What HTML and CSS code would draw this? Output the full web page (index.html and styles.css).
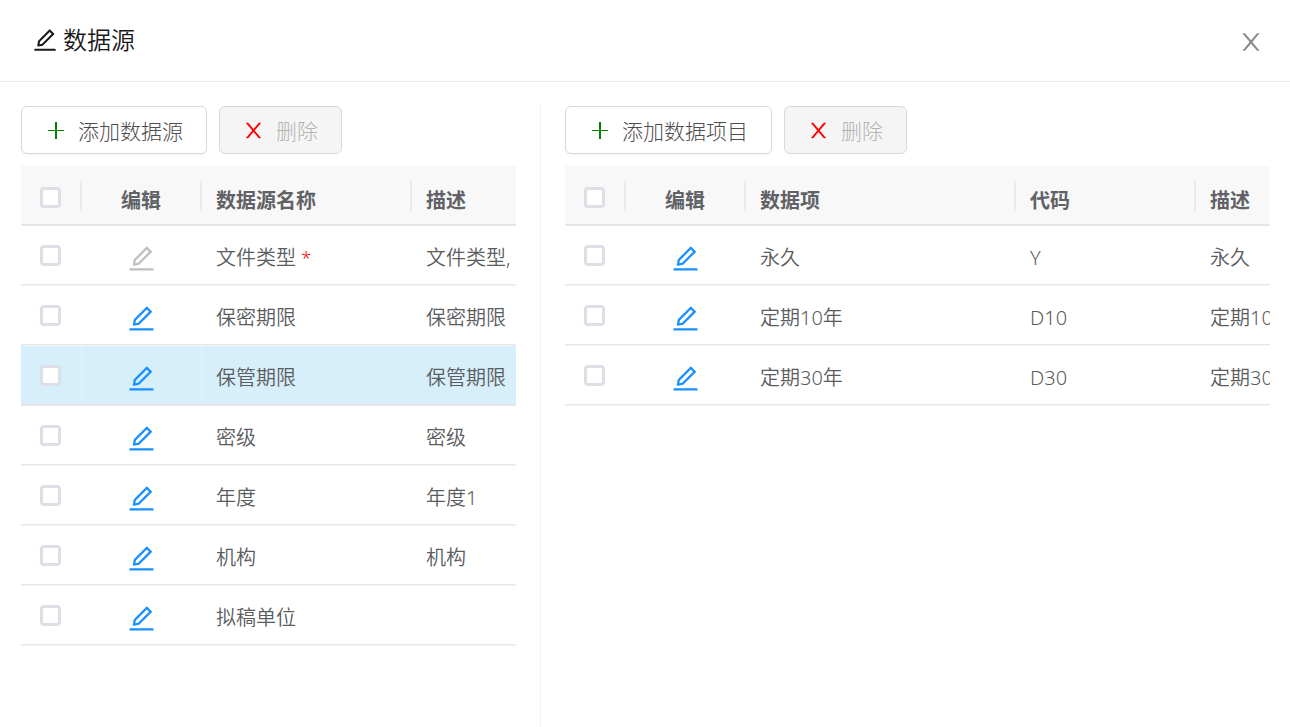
FILE: index.html
```
<!DOCTYPE html>
<html lang="zh-CN">
<head>
<meta charset="utf-8">
<meta name="viewport" content="width=device-width, initial-scale=1">
<title>数据源</title>
<link rel="stylesheet" href="styles.css">
</head>
<body>
<svg class="sprite" aria-hidden="true">
  <symbol id="icon-edit" viewBox="64 64 896 896"><path d="M257.7 752c2 0 4-.2 6-.5L431.9 722c2-.4 3.9-1.3 5.3-2.8l423.9-423.9a9.96 9.96 0 000-14.1L694.9 114.9c-1.9-1.9-4.4-2.9-7.1-2.9s-5.2 1-7.1 2.9L256.8 538.8c-1.5 1.5-2.4 3.3-2.8 5.3l-29.5 168.2a33.5 33.5 0 009.4 29.8c6.6 6.4 14.9 9.9 23.8 9.9zm67.4-174.4L687.8 215l73.3 73.3-362.7 362.6-88.9 15.7 15.6-89zM880 836H144c-17.7 0-32 14.3-32 32v36c0 4.4 3.6 8 8 8h784c4.4 0 8-3.6 8-8v-36c0-17.7-14.3-32-32-32z"/></symbol>
  <symbol id="icon-close" viewBox="64 64 896 896"><path d="M563.8 512l262.5-312.9c4.4-5.2.7-13.1-6.1-13.1h-79.8c-4.7 0-9.2 2.1-12.3 5.7L511.6 449.8 295.1 191.7c-3-3.6-7.5-5.7-12.3-5.7H203c-6.8 0-10.5 7.9-6.1 13.1L459.4 512 196.9 824.9A7.95 7.95 0 00203 838h79.8c4.7 0 9.2-2.1 12.3-5.7l216.5-258.1 216.5 258.1c3 3.6 7.5 5.7 12.3 5.7h79.8c6.8 0 10.5-7.9 6.1-13.1L563.8 512z"/></symbol>
  <symbol id="icon-plus" viewBox="0 0 21 21"><path d="M10 2h2v17h-2zM3 10h16v1H3z"/></symbol>
</svg>

<header class="header">
  <h1 class="title"><svg class="title-icon"><use href="#icon-edit"/></svg>数据源</h1>
  <button class="close" type="button" aria-label="关闭"><svg class="close-icon"><use href="#icon-close"/></svg></button>
</header>

<main class="content">
  <section class="pane pane-sources">
    <div class="toolbar">
      <button class="btn" type="button"><svg class="btn-icon add"><use href="#icon-plus"/></svg>添加数据源</button>
      <button class="btn" type="button" disabled><svg class="btn-icon remove"><use href="#icon-close"/></svg>删除</button>
    </div>
    <div class="table-wrap">
      <table class="grid">
        <colgroup><col class="col-check"><col class="col-edit"><col class="col-source"><col></colgroup>
        <thead>
          <tr><th class="check"><input type="checkbox" aria-label="全选数据源"></th><th class="edit">编辑</th><th>数据源名称</th><th>描述</th></tr>
        </thead>
        <tbody>
          <tr><td class="check"><input type="checkbox" aria-label="选择文件类型"></td><td class="edit"><button class="edit-btn" type="button" aria-label="编辑文件类型" disabled><svg><use href="#icon-edit"/></svg></button></td><td>文件类型 <span class="required">*</span></td><td>文件类型,</td></tr>
          <tr><td class="check"><input type="checkbox" aria-label="选择保密期限"></td><td class="edit"><button class="edit-btn" type="button" aria-label="编辑保密期限"><svg><use href="#icon-edit"/></svg></button></td><td>保密期限</td><td>保密期限</td></tr>
          <tr class="current"><td class="check"><input type="checkbox" aria-label="选择保管期限"></td><td class="edit"><button class="edit-btn" type="button" aria-label="编辑保管期限"><svg><use href="#icon-edit"/></svg></button></td><td>保管期限</td><td>保管期限</td></tr>
          <tr><td class="check"><input type="checkbox" aria-label="选择密级"></td><td class="edit"><button class="edit-btn" type="button" aria-label="编辑密级"><svg><use href="#icon-edit"/></svg></button></td><td>密级</td><td>密级</td></tr>
          <tr><td class="check"><input type="checkbox" aria-label="选择年度"></td><td class="edit"><button class="edit-btn" type="button" aria-label="编辑年度"><svg><use href="#icon-edit"/></svg></button></td><td>年度</td><td>年度1</td></tr>
          <tr><td class="check"><input type="checkbox" aria-label="选择机构"></td><td class="edit"><button class="edit-btn" type="button" aria-label="编辑机构"><svg><use href="#icon-edit"/></svg></button></td><td>机构</td><td>机构</td></tr>
          <tr><td class="check"><input type="checkbox" aria-label="选择拟稿单位"></td><td class="edit"><button class="edit-btn" type="button" aria-label="编辑拟稿单位"><svg><use href="#icon-edit"/></svg></button></td><td>拟稿单位</td><td></td></tr>
        </tbody>
      </table>
    </div>
  </section>

  <section class="pane pane-items">
    <div class="toolbar">
      <button class="btn" type="button"><svg class="btn-icon add"><use href="#icon-plus"/></svg>添加数据项目</button>
      <button class="btn" type="button" disabled><svg class="btn-icon remove"><use href="#icon-close"/></svg>删除</button>
    </div>
    <div class="table-wrap">
      <table class="grid">
        <colgroup><col class="col-check"><col class="col-edit"><col class="col-item"><col class="col-code"><col></colgroup>
        <thead>
          <tr><th class="check"><input type="checkbox" aria-label="全选数据项"></th><th class="edit">编辑</th><th>数据项</th><th>代码</th><th>描述</th></tr>
        </thead>
        <tbody>
          <tr><td class="check"><input type="checkbox" aria-label="选择永久"></td><td class="edit"><button class="edit-btn" type="button" aria-label="编辑永久"><svg><use href="#icon-edit"/></svg></button></td><td>永久</td><td>Y</td><td>永久</td></tr>
          <tr><td class="check"><input type="checkbox" aria-label="选择定期10年"></td><td class="edit"><button class="edit-btn" type="button" aria-label="编辑定期10年"><svg><use href="#icon-edit"/></svg></button></td><td>定期10年</td><td>D10</td><td>定期10年</td></tr>
          <tr><td class="check"><input type="checkbox" aria-label="选择定期30年"></td><td class="edit"><button class="edit-btn" type="button" aria-label="编辑定期30年"><svg><use href="#icon-edit"/></svg></button></td><td>定期30年</td><td>D30</td><td>定期30年</td></tr>
        </tbody>
      </table>
    </div>
  </section>
</main>
</body>
</html>
```

FILE: styles.css
```
* {
  box-sizing: border-box;
}

body {
  margin: 0;
  min-height: 100vh;
  display: flex;
  flex-direction: column;
  background: #fff;
  color: #5a5c60;
  font: 350 20px/30px "Noto Sans", "Noto Sans CJK SC", sans-serif;
}

button {
  font: inherit;
  cursor: pointer;
}

button:disabled {
  cursor: not-allowed;
}

svg {
  display: block;
  flex: none;
  fill: currentColor;
}

.sprite {
  position: absolute;
  width: 0;
  height: 0;
}

.header {
  display: flex;
  align-items: center;
  justify-content: space-between;
  padding: 22px 24px 23px 33px;
  border-bottom: 1px solid #e8e8e8;
}

.title {
  display: flex;
  align-items: center;
  gap: 6px;
  margin: 0;
  color: #1a1a1a;
  font-size: 24px;
  font-weight: 350;
  line-height: 36px;
}

.title-icon {
  width: 24px;
  height: 24px;
}

.close {
  padding: 4px 3px 0;
  border: 0;
  background: none;
  color: #8c8c8c;
}

.close-icon {
  width: 24px;
  height: 24px;
}

.content {
  flex: 1;
  display: grid;
  grid-template-columns: 541fr 749fr;
  padding-top: 24px;
}

.pane {
  min-width: 0;
}

.pane-sources {
  padding: 0 24px 0 21px;
  border-right: 1px solid #f0f0f0;
}

.pane-items {
  padding: 0 20px 0 24px;
}

.toolbar {
  display: flex;
  gap: 12px;
  margin-bottom: 12px;
}

.btn {
  display: flex;
  align-items: center;
  gap: 12px;
  height: 48px;
  padding: 2px 23px 0;
  border: 1px solid #d9d9d9;
  border-radius: 6px;
  background: #fff;
  box-shadow: 0 2px 2px rgba(0, 0, 0, 0.03);
  color: #4d4d4d;
  font-size: 21px;
  font-weight: 300;
  white-space: nowrap;
}

.btn:disabled {
  background: #f5f5f5;
  box-shadow: none;
  color: #b3b3b3;
}

.btn-icon {
  width: 21px;
  height: 21px;
  margin-bottom: 2px;
}

.add {
  color: #008000;
}

.remove {
  color: #f00;
}

.table-wrap {
  overflow: hidden;
}

.grid {
  width: 100%;
  table-layout: fixed;
  border-collapse: separate;
  border-spacing: 0;
}

.col-check {
  width: 61px;
}

.col-edit {
  width: 120px;
}

.col-source {
  width: 210px;
}

.col-item {
  width: 270px;
}

.col-code {
  width: 180px;
}

.grid th,
.grid td {
  height: 60px;
  padding: 5px 0 0 14px;
  overflow: hidden;
  border-bottom: 1px solid #f4f4f4;
  box-shadow: inset 0 -1px #e6e6e6;
  text-align: left;
  white-space: nowrap;
}

.grid th {
  background: linear-gradient(#e8eaec, #e8eaec) right center / 2px 30px no-repeat #f8f8f8;
  border-bottom-color: #e6e6e6;
  padding-top: 10px;
  color: #606266;
  font-weight: 700;
}

.grid th:last-child {
  background: #f8f8f8;
}

.grid .check {
  padding: 0 3px 0 0;
  text-align: center;
}

.grid th.check {
  padding-top: 4px;
}

.grid .edit {
  padding-left: 0;
  padding-right: 2px;
  text-align: center;
}

.grid td.edit {
  padding-top: 6px;
}

.current td {
  border-bottom-color: #e6e6e6;
  background: #d7effa;
}

.current .check,
.current .edit {
  box-shadow: inset 0 -1px #e6e6e6, inset -1px 0 #e4f3fb;
}

.grid input {
  appearance: none;
  display: block;
  width: 21px;
  height: 21px;
  margin: 0 auto;
  border: 3px solid #dcdfe6;
  border-radius: 4px;
  background: #fff;
}

.grid input:checked {
  background: #1890ff;
}

.edit-btn {
  display: block;
  margin: 0 auto;
  padding: 0;
  border: 0;
  background: none;
  color: #1890ff;
}

.edit-btn:disabled {
  color: #bfbfbf;
}

.edit-btn svg {
  width: 27px;
  height: 27px;
}

.required {
  color: #f00;
  font-size: 18px;
}
```
